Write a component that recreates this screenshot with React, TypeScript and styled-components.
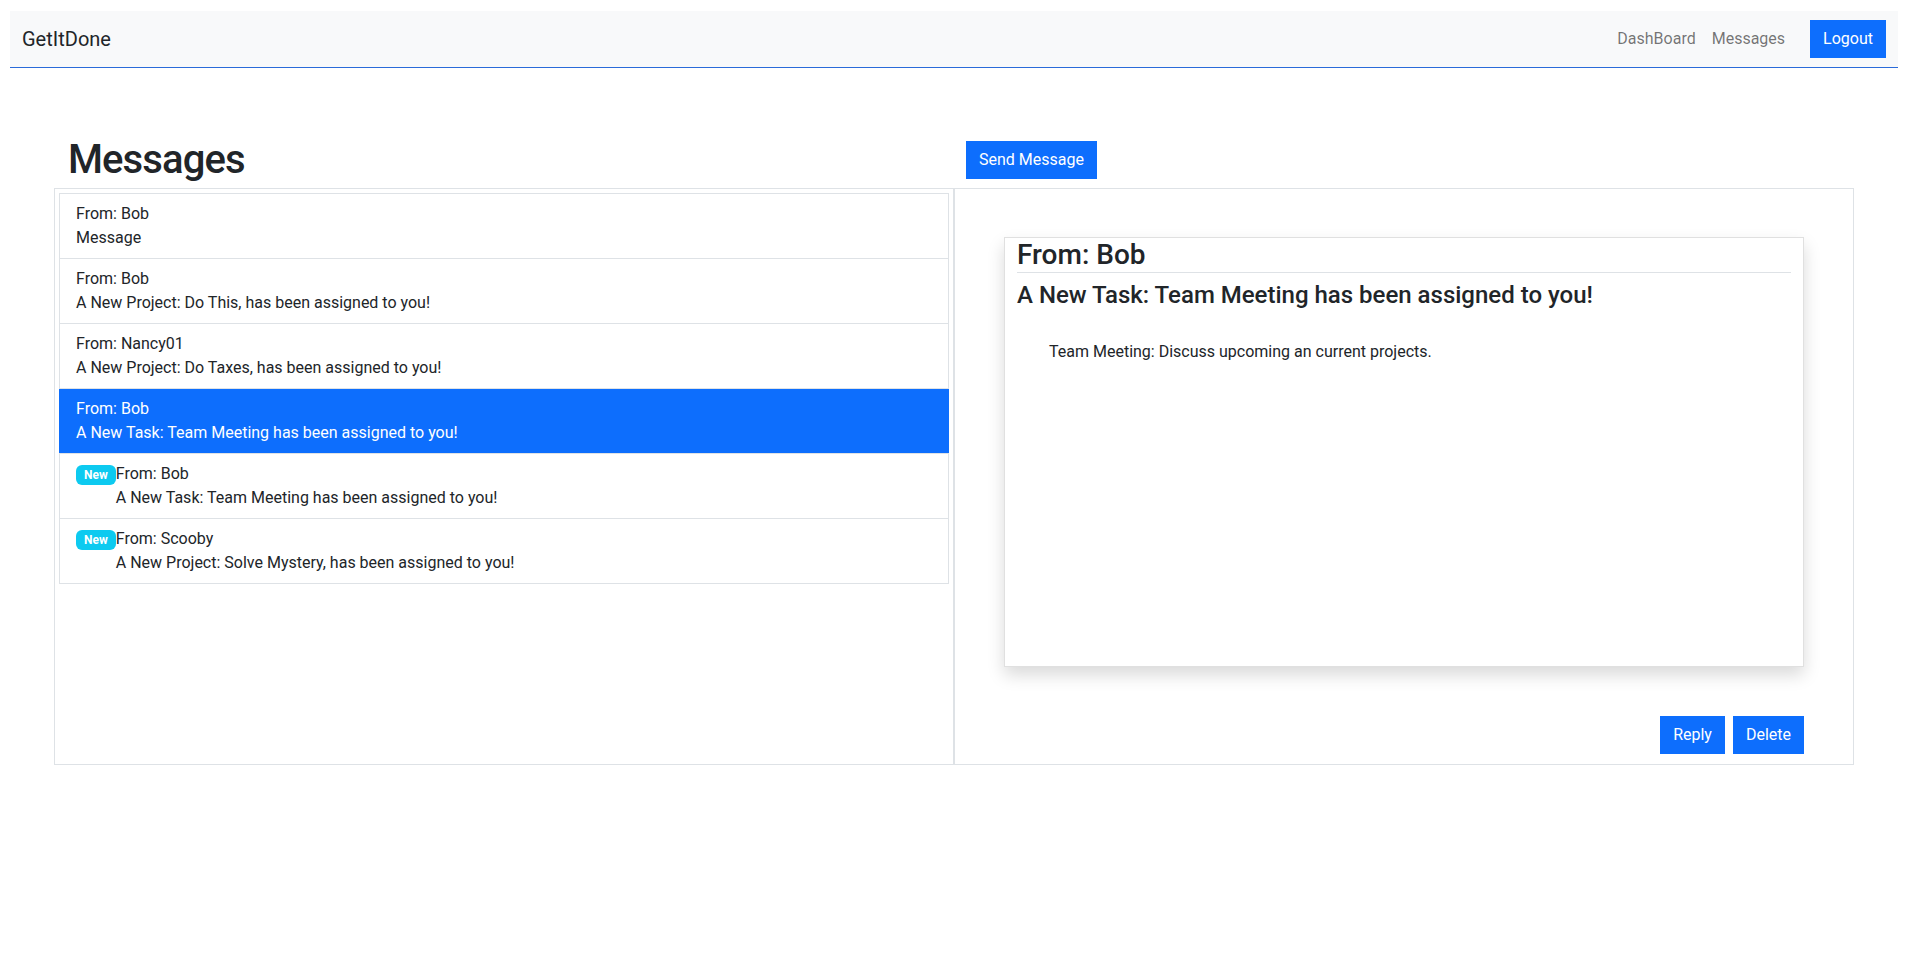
import styled, { createGlobalStyle, css } from "styled-components";

const colors = {
  primary: "#0d6efd",
  text: "#212529",
  border: "#dee2e6",
  navBg: "#f8f9fa",
  muted: "rgba(0, 0, 0, 0.55)",
  info: "#0dcaf0",
  white: "#ffffff",
};

const GlobalStyle = createGlobalStyle`
  * {
    box-sizing: border-box;
  }

  body {
    margin: 0;
    font-family: Roboto, "Noto Sans", "Liberation Sans", sans-serif;
    font-size: 16px;
    line-height: 1.5;
    color: ${colors.text};
    background: ${colors.white};
  }
`;

type Message = {
  from: string;
  text: string;
  isNew?: boolean;
  active?: boolean;
};

const messages: Message[] = [
  { from: "Bob", text: "Message" },
  { from: "Bob", text: "A New Project: Do This, has been assigned to you!" },
  { from: "Nancy01", text: "A New Project: Do Taxes, has been assigned to you!" },
  {
    from: "Bob",
    text: "A New Task: Team Meeting has been assigned to you!",
    active: true,
  },
  {
    from: "Bob",
    text: "A New Task: Team Meeting has been assigned to you!",
    isNew: true,
  },
  {
    from: "Scooby",
    text: "A New Project: Solve Mystery, has been assigned to you!",
    isNew: true,
  },
];

export default function App() {
  return (
    <>
      <GlobalStyle />
      <StyledPage>
        <StyledNavbar>
          <StyledBrand>GetItDone</StyledBrand>
          <StyledNav>
            <StyledNavLink>DashBoard</StyledNavLink>
            <StyledNavLink>Messages</StyledNavLink>
            <StyledButton $nav>Logout</StyledButton>
          </StyledNav>
        </StyledNavbar>

        <StyledContainer>
          <StyledHeaderRow>
            <StyledTitle>Messages</StyledTitle>
            <StyledHeaderAction>
              <StyledButton>Send Message</StyledButton>
            </StyledHeaderAction>
          </StyledHeaderRow>

          <StyledPanels>
            <StyledPanel $side="left">
              <StyledList>
                {messages.map((msg, i) => (
                  <StyledItem key={i} $active={msg.active}>
                    {msg.isNew && <StyledBadge>New</StyledBadge>}
                    <div>
                      <div>From: {msg.from}</div>
                      <div>{msg.text}</div>
                    </div>
                  </StyledItem>
                ))}
              </StyledList>
            </StyledPanel>

            <StyledPanel $side="right">
              <StyledCard>
                <StyledCardTitle>From: Bob</StyledCardTitle>
                <StyledRule />
                <StyledSubject>
                  A New Task: Team Meeting has been assigned to you!
                </StyledSubject>
                <StyledBody>
                  Team Meeting: Discuss upcoming an current projects.
                </StyledBody>
              </StyledCard>
              <StyledActions>
                <StyledButton>Reply</StyledButton>
                <StyledButton>Delete</StyledButton>
              </StyledActions>
            </StyledPanel>
          </StyledPanels>
        </StyledContainer>
      </StyledPage>
    </>
  );
}

const StyledPage = styled.div`
  padding: 11px 13px 0 10px;
  min-height: 953px;
`;

const StyledNavbar = styled.nav`
  height: 57px;
  padding: 0 12px;
  background-color: ${colors.navBg};
  border-bottom: 1px solid #2a6bd9;

  display: flex;
  align-items: center;
  justify-content: space-between;
`;

const StyledBrand = styled.span`
  font-size: 20px;
  line-height: 30px;
  color: ${colors.text};
`;

const StyledNav = styled.div`
  display: flex;
  align-items: center;
`;

const StyledNavLink = styled.a`
  padding: 8px 8px;
  color: ${colors.muted};
  cursor: pointer;
`;

const StyledButton = styled.button<{ $nav?: boolean }>`
  font-family: inherit;
  font-size: 16px;
  line-height: 24px;
  padding: 6px 12px;
  color: ${colors.white};
  background-color: ${colors.primary};
  border: 1px solid ${colors.primary};
  border-radius: 0;
  cursor: pointer;

  ${({ $nav }) =>
    $nav &&
    css`
      margin-left: 17px;
    `}
`;

const StyledContainer = styled.main`
  width: 1800px;
  margin: 0 auto;
  padding-top: 66px;
`;

const StyledHeaderRow = styled.div`
  display: grid;
  grid-template-columns: 900px 900px;
  height: 54px;
`;

const StyledTitle = styled.h1`
  margin: 0;
  padding: 2px 0 0 14px;
  font-size: 40px;
  font-weight: 500;
  line-height: 48px;
  letter-spacing: -0.9px;
`;

const StyledHeaderAction = styled.div`
  padding: 7px 0 0 12px;
`;

const StyledPanels = styled.div`
  display: grid;
  grid-template-columns: 900px 900px;
`;

const StyledPanel = styled.section<{ $side: "left" | "right" }>`
  border: 1px solid ${colors.border};

  ${({ $side }) =>
    $side === "left"
      ? css`
          padding: 4px;
        `
      : css`
          padding: 48px 49px 10px;
          display: flex;
          flex-direction: column;
        `}
`;

const StyledList = styled.ul`
  list-style: none;
  margin: 0;
  padding: 0;
  border: 1px solid ${colors.border};
`;

const StyledItem = styled.li<{ $active?: boolean }>`
  display: flex;
  align-items: flex-start;
  padding: 8px 16px;
  border-bottom: 1px solid ${colors.border};

  &:last-child {
    border-bottom: none;
  }

  ${({ $active }) =>
    $active &&
    css`
      background-color: ${colors.primary};
      color: ${colors.white};
      margin: 0 -1px;
      padding: 8px 17px;
    `}
`;

const StyledBadge = styled.span`
  margin-top: 3px;
  padding: 3px 8px;
  font-size: 12px;
  font-weight: 700;
  line-height: 14px;
  color: ${colors.white};
  background-color: ${colors.info};
  border-radius: 6px;
`;

const StyledCard = styled.article`
  height: 430px;
  padding: 0 12px;
  border: 1px solid rgba(0, 0, 0, 0.12);
  box-shadow: 0 8px 16px rgba(0, 0, 0, 0.15);
`;

const StyledCardTitle = styled.h3`
  margin: 0;
  font-size: 28px;
  font-weight: 500;
  line-height: 1.2;
`;

const StyledRule = styled.hr`
  margin: 0;
  border: 0;
  border-top: 1px solid ${colors.border};
`;

const StyledSubject = styled.h4`
  margin: 8px 0 0;
  font-size: 24px;
  font-weight: 500;
  line-height: 1.2;
`;

const StyledBody = styled.p`
  margin: 31px 0 0;
  padding-left: 32px;
`;

const StyledActions = styled.div`
  margin-top: 49px;
  display: flex;
  justify-content: flex-end;
  gap: 8px;
`;
